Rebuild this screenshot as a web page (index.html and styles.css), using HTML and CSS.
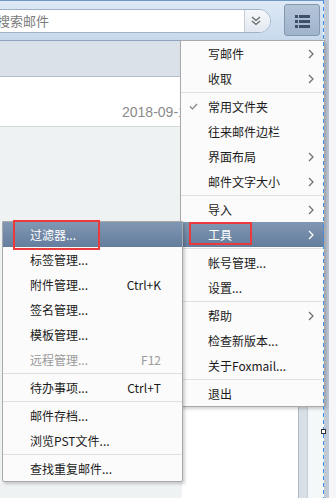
FILE: index.html
```html
<!DOCTYPE html>
<html lang="zh-CN">
<head>
    <meta charset="UTF-8">
    <title>Foxmail 菜单</title>
    <link rel="stylesheet" href="styles.css">
</head>
<body>
    <div class="screen">
        <div class="window">
            <div class="toolbar">
                <div class="search">
                    <span class="search-text">搜索邮件</span>
                    <span class="search-drop">
                        <svg width="12" height="10" viewBox="0 0 12 10"><polyline points="2,1 6,4.5 10,1" fill="none" stroke="#666" stroke-width="1.3"/><polyline points="2,5 6,8.5 10,5" fill="none" stroke="#666" stroke-width="1.3"/></svg>
                    </span>
                </div>
                <div class="menu-btn">
                    <svg width="36" height="32" viewBox="0 0 36 32">
                        <rect x="11" y="11" width="3" height="3" fill="#3d5068"/>
                        <rect x="15" y="11" width="11" height="3" fill="#3d5068"/>
                        <rect x="11" y="16" width="3" height="3" fill="#3d5068"/>
                        <rect x="15" y="16" width="11" height="3" fill="#3d5068"/>
                        <rect x="11" y="21" width="3" height="3" fill="#3d5068"/>
                        <rect x="15" y="21" width="11" height="3" fill="#3d5068"/>
                    </svg>
                </div>
            </div>
            <div class="content">
                <div class="list-pane">
                    <div class="list-head"></div>
                    <div class="mail-row"><span class="mail-date">2018-09-18</span></div>
                    <div class="list-rest"></div>
                </div>
                <div class="read-pane"></div>
                <div class="side-strip"></div>
                <div class="side-light"></div>
            </div>
        </div>
        <div class="dash"><span class="handle"></span></div>
        <div class="outer">
            <div class="outer-strip"></div>
            <div class="outer-light"></div>
        </div>

        <div class="menu main-menu">
            <div class="item">写邮件<span class="arrow"></span></div>
            <div class="item">收取<span class="arrow"></span></div>
            <div class="sep"></div>
            <div class="item"><span class="check"></span>常用文件夹</div>
            <div class="item">往来邮件边栏</div>
            <div class="item">界面布局<span class="arrow"></span></div>
            <div class="item">邮件文字大小<span class="arrow"></span></div>
            <div class="sep"></div>
            <div class="item">导入<span class="arrow"></span></div>
            <div class="item active">工具<span class="arrow"></span><span class="mark mark-tools"></span></div>
            <div class="sep"></div>
            <div class="item">帐号管理...</div>
            <div class="item">设置...</div>
            <div class="sep"></div>
            <div class="item">帮助<span class="arrow"></span></div>
            <div class="item">检查新版本...</div>
            <div class="item">关于Foxmail...</div>
            <div class="sep"></div>
            <div class="item">退出</div>
        </div>

        <div class="menu sub-menu">
            <div class="item active">过滤器...<span class="mark mark-filter"></span></div>
            <div class="item">标签管理...</div>
            <div class="item">附件管理...<span class="key">Ctrl+K</span></div>
            <div class="item">签名管理...</div>
            <div class="item">模板管理...</div>
            <div class="item disabled">远程管理...<span class="key">F12</span></div>
            <div class="sep"></div>
            <div class="item">待办事项...<span class="key">Ctrl+T</span></div>
            <div class="sep"></div>
            <div class="item">邮件存档...</div>
            <div class="item">浏览PST文件...</div>
            <div class="sep"></div>
            <div class="item">查找重复邮件...</div>
        </div>
    </div>
</body>
</html>
```

FILE: styles.css
```css
* {
    box-sizing: border-box;
}
body {
    margin: 0;
    width: 336px;
    height: 498px;
    overflow: hidden;
    font-family: "Noto Sans CJK SC", "Liberation Sans", sans-serif;
    font-size: 12px;
    color: #1a1a1a;
}
.screen {
    position: relative;
    display: flex;
    width: 336px;
    height: 498px;
    overflow: hidden;
}
.window {
    width: 323px;
    display: flex;
    flex-direction: column;
}
.toolbar {
    height: 41px;
    display: flex;
    align-items: flex-start;
    background: linear-gradient(#dde9f6, #c8d9ec);
    border-top: 1px solid #6f98c9;
    border-bottom: 1px solid #8ea3bc;
    overflow: hidden;
}
.search {
    margin-left: -20px;
    margin-top: 8px;
    width: 291px;
    height: 24px;
    display: flex;
    background: #fff;
    border: 1px solid #9fb2c6;
    border-radius: 0 12px 12px 0;
    overflow: hidden;
}
.search-text {
    flex: 1;
    padding-left: 16px;
    line-height: 22px;
    font-size: 13px;
    color: #7a7a7a;
}
.search-drop {
    width: 26px;
    display: flex;
    align-items: center;
    justify-content: center;
    padding-right: 3px;
    border-left: 1px solid #c3ceda;
    background: linear-gradient(#f6f8fb, #e1e8f0);
}
.menu-btn {
    margin-left: 13px;
    margin-top: 3px;
    width: 36px;
    height: 32px;
    border: 1px solid #8497af;
    border-radius: 3px;
    background: linear-gradient(#b4c5d9, #9fb3cb);
}
.menu-btn svg {
    display: block;
    margin: -1px;
}
.content {
    flex: 1;
    display: flex;
}
.list-pane {
    width: 182px;
    display: flex;
    flex-direction: column;
}
.list-head {
    height: 36px;
    background: #dae1e9;
    border-bottom: 1px solid #b4bec9;
}
.mail-row {
    height: 50px;
    background: #fff;
    border-bottom: 1px solid #d3dade;
    padding: 26px 0 0 122px;
    white-space: nowrap;
}
.mail-date {
    font-family: "Liberation Sans", sans-serif;
    font-size: 14px;
    color: #8a8a8a;
}
.list-rest {
    flex: 1;
    background: #eef2f2;
}
.read-pane {
    flex: 1;
    background: #fff;
}
.side-strip {
    width: 10px;
    background: #d8dfe6;
    border-left: 1px solid #aeb8c3;
    border-right: 1px solid #c4ccd4;
}
.side-light {
    width: 15px;
    background: #f5f8f8;
}
.dash {
    position: relative;
    z-index: 5;
    width: 1px;
    background: repeating-linear-gradient(#3b8eea 0 4px, transparent 4px 7px);
}
.handle {
    position: absolute;
    left: -2px;
    top: 429px;
    width: 5px;
    height: 5px;
    background: #fff;
    border: 1px solid #333;
}
.outer {
    flex: 1;
    display: flex;
}
.outer-strip {
    width: 5px;
    background: #c1cbd8;
}
.outer-light {
    flex: 1;
    background: #f4f6f8;
}

/* menus */
.menu {
    position: absolute;
    z-index: 2;
    background: #fbfbfb;
    border: 1px solid #a9a9a9;
    box-shadow: 2px 2px 3px rgba(0, 0, 0, 0.18);
}
.main-menu {
    left: 180px;
    top: 40px;
    width: 145px;
    height: 367px;
}
.sub-menu {
    z-index: 3;
    left: 2px;
    top: 221px;
    width: 181px;
    height: 261px;
    border-radius: 0 0 2px 2px;
}
.item {
    position: relative;
    height: 25px;
    display: flex;
    align-items: center;
    padding-left: 27px;
    white-space: nowrap;
}
.item.active {
    background: linear-gradient(#8198b3, #647d9d);
    color: #fff;
}
.item.disabled {
    color: #9a9a9a;
}
.sep {
    height: 1px;
    margin: 1px 0;
    background: #e0e0e0;
}
.arrow {
    margin-left: auto;
    margin-right: 10px;
    width: 6px;
    height: 10px;
    background: no-repeat center / 6px 10px url("data:image/svg+xml,%3Csvg xmlns='http://www.w3.org/2000/svg' width='6' height='10'%3E%3Cpolyline points='1,1 5,5 1,9' fill='none' stroke='%23707070' stroke-width='1.3'/%3E%3C/svg%3E");
}
.active .arrow {
    background-image: url("data:image/svg+xml,%3Csvg xmlns='http://www.w3.org/2000/svg' width='6' height='10'%3E%3Cpolyline points='1,1 5,5 1,9' fill='none' stroke='%23ffffff' stroke-width='1.3'/%3E%3C/svg%3E");
}
.check {
    position: absolute;
    left: 8px;
    top: 9px;
    width: 9px;
    height: 7px;
    background: no-repeat center / 9px 7px url("data:image/svg+xml,%3Csvg xmlns='http://www.w3.org/2000/svg' width='9' height='7'%3E%3Cpolyline points='1,3.5 3.5,6 8,1' fill='none' stroke='%23808080' stroke-width='1.2'/%3E%3C/svg%3E");
}
.key {
    margin-left: auto;
    margin-right: 21px;
}
.mark {
    position: absolute;
    border: 2px solid #ea3a3c;
}
.mark-tools {
    left: 8px;
    top: 0;
    width: 63px;
    height: 23px;
}
.mark-filter {
    left: 10px;
    top: -2px;
    width: 87px;
    height: 30px;
}
```
